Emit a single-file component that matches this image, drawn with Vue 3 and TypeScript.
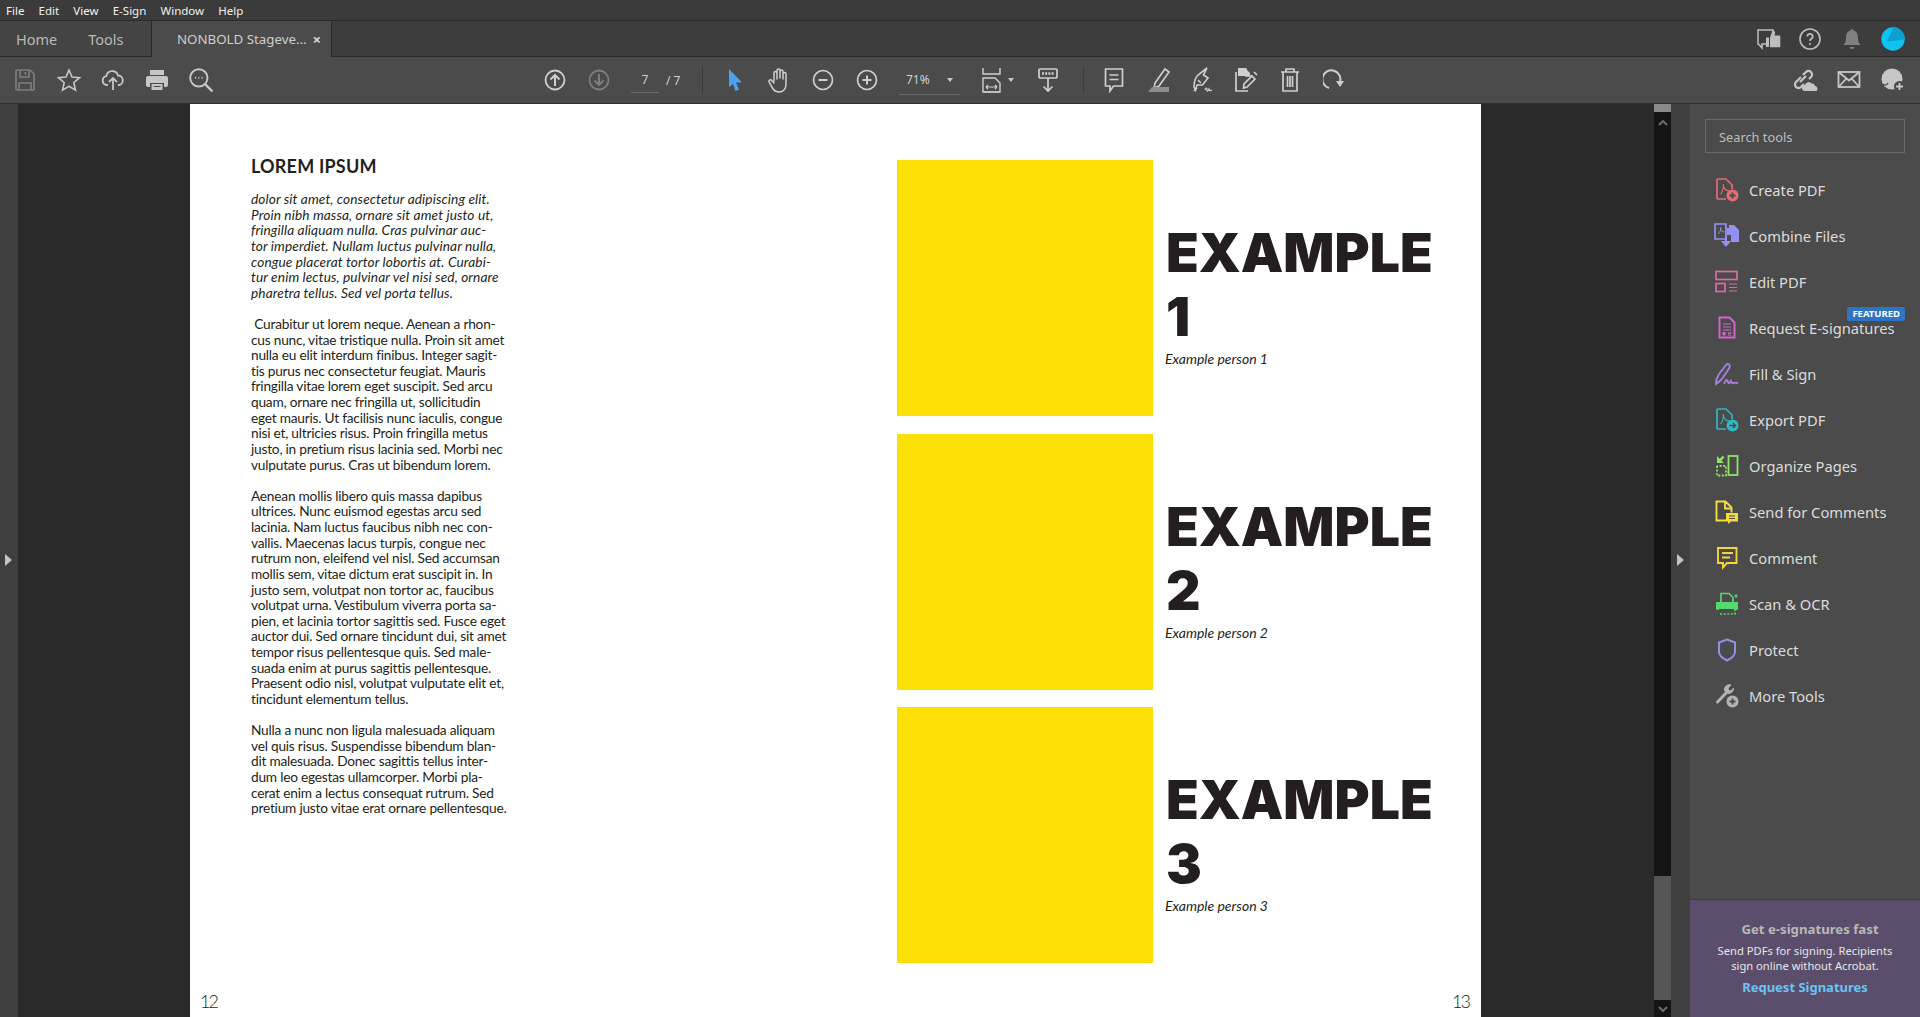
<template>
  <div class="app">
    <div class="menubar">
      <span v-for="m in menus" :key="m">{{ m }}</span>
    </div>

    <div class="tabbar">
      <div class="nav-tabs">
        <span>Home</span>
        <span>Tools</span>
      </div>
      <div class="doc-tab">
        <span>NONBOLD Stageve...</span>
        <b>×</b>
      </div>
      <div class="tab-actions">
        <button class="btn-icon">
          <svg width="24" height="24" viewBox="0 0 24 24" fill="none" stroke="#bdbdbd" stroke-width="1.500"><path d="M11 17H6l-1 0v4l-3.500-4H1V3h15v3"/><path d="M9 10.500h3v9.500H9z" fill="#bdbdbd" stroke="none"/><path d="M13 10.500l2.500-7c2 0 3 1.300 2.500 3l-.5 2h5a.8.8 0 0 1 .8.800V19.500a.8.8 0 0 1-.8.800H13z" fill="#bdbdbd" stroke="none"/></svg>
        </button>
        <button class="btn-icon">
          <svg width="24" height="24" viewBox="0 0 24 24" fill="none" stroke="#bdbdbd" stroke-width="1.600"><circle cx="12" cy="12" r="10"/><path d="M9.300 9.500a2.700 2.700 0 1 1 4 2.400c-.9.500-1.300 1-1.300 2" stroke-width="1.800"/><circle cx="12" cy="17" r="1.100" fill="#bdbdbd" stroke="none"/></svg>
        </button>
        <button class="btn-icon">
          <svg width="24" height="24" viewBox="0 0 24 24" fill="#808080"><path d="M12 2a1.500 1.500 0 0 1 1.500 1.600C17 4.500 18 7.500 18 11c0 3.500 1 5.500 2.500 7h-17C5 16.500 6 14.500 6 11c0-3.500 1-6.500 4.500-7.400A1.500 1.500 0 0 1 12 2z"/><path d="M9.500 20h5a2.500 2 0 0 1-5 0z"/></svg>
        </button>
        <button class="btn-icon">
          <svg width="24" height="24" viewBox="0 0 24 24"><circle cx="12" cy="12" r="11.700" fill="#10c2f2"/><path d="M12.500 .3A11.700 11.700 0 0 1 23.700 12.500L6 14.500z" fill="#0c9fd0"/></svg>
        </button>
      </div>
    </div>

    <div class="toolbar">
      <button class="btn-icon dim">
        <svg width="22" height="24" viewBox="0 0 22 24" fill="none" stroke="currentColor" stroke-width="1.700"><path d="M3 2h13l4 4v15a1 1 0 0 1-1 1H3a1 1 0 0 1-1-1V3a1 1 0 0 1 1-1z"/><path d="M6 2v7h9V2M5 22v-7h12v7M11.500 4v3"/></svg>
      </button>
      <button class="btn-icon">
        <svg width="24" height="24" viewBox="0 0 24 24" fill="none" stroke="#c6c6c6" stroke-width="1.600"><path d="M12 2l3 7 7.500.7-5.700 5 1.700 7.400-6.500-3.900-6.500 3.900 1.700-7.400-5.700-5L9 9z"/></svg>
      </button>
      <button class="btn-icon">
        <svg width="24" height="24" viewBox="0 0 24 24" fill="none" stroke="#c6c6c6" stroke-width="1.800"><path d="M7 17H6a4.500 4.500 0 0 1-.7-8.900A6 6 0 0 1 17 7.500a4.800 4.800 0 0 1 1 9.500h-1"/><path d="M12 22V10M8 14l4-4 4 4"/></svg>
      </button>
      <button class="btn-icon">
        <svg width="24" height="24" viewBox="0 0 24 24" fill="#c6c6c6"><path d="M5 2h14v5H5zM3 8h18a2 2 0 0 1 2 2v7a2 2 0 0 1-2 2h-2v-4H5v4H3a2 2 0 0 1-2-2v-7a2 2 0 0 1 2-2z"/><path d="M6.500 16h11v6h-11zM8.500 18v1h7v-1z" fill-rule="evenodd"/></svg>
      </button>
      <button class="btn-icon">
        <svg width="26" height="26" viewBox="0 0 24 24" fill="none" stroke="#c6c6c6" stroke-width="1.800"><circle cx="10" cy="10" r="8"/><path d="M16 16l6.500 6.500" stroke-width="2.200"/><path d="M6.500 10h1M9.500 10h1M12.500 10h1" stroke-width="1.800"/></svg>
      </button>

      <div class="nav-group">
        <button class="btn-icon">
          <svg width="22" height="22" viewBox="0 0 22 22" fill="none" stroke="#cfcfcf" stroke-width="1.800"><circle cx="11" cy="11" r="9.500"/><path d="M11 17V6M6.500 10.500L11 6l4.500 4.500" stroke-width="2"/></svg>
        </button>
        <button class="btn-icon dim">
          <svg width="22" height="22" viewBox="0 0 22 22" fill="none" stroke="currentColor" stroke-width="1.800"><circle cx="11" cy="11" r="9.500"/><path d="M11 5v11M6.500 11.500L11 16l4.500-4.500" stroke-width="2"/></svg>
        </button>
        <div class="page-box">
          <span class="page-input">7</span>
          <span>/ 7</span>
        </div>
        <i class="divider"></i>
      </div>

      <button class="btn-icon">
        <svg width="20" height="24" viewBox="0 0 20 24" fill="#4ba3ef"><path d="M4 1l13 13.500h-6l3 7-3.500 1.500-2.500-7L4 19z"/></svg>
      </button>
      <button class="btn-icon">
        <svg width="24" height="26" viewBox="0 0 24 26" fill="none" stroke="#cfcfcf" stroke-width="1.500" stroke-linecap="round"><path d="M7 14V6a1.500 1.500 0 0 1 3 0v6M10 11V3.500a1.500 1.500 0 0 1 3 0V11M13 11V4.500a1.500 1.500 0 0 1 3 0V12M16 12V7a1.500 1.500 0 0 1 3 0v10c0 5-3 8-7 8-3 0-5-1.500-6.500-4L2 15c-.8-1.500 1.500-3 2.700-1.500L7 16"/></svg>
      </button>
      <button class="btn-icon">
        <svg width="22" height="22" viewBox="0 0 22 22" fill="none" stroke="#cfcfcf" stroke-width="1.700"><circle cx="11" cy="11" r="9.500"/><path d="M6.500 11h9" stroke-width="2"/></svg>
      </button>
      <button class="btn-icon">
        <svg width="22" height="22" viewBox="0 0 22 22" fill="none" stroke="#cfcfcf" stroke-width="1.700"><circle cx="11" cy="11" r="9.500"/><path d="M6.500 11h9M11 6.500v9" stroke-width="2"/></svg>
      </button>
      <div class="zoom-box">
        <span>71%</span>
        <i class="caret"></i>
      </div>
      <button class="btn-icon fit">
        <svg width="22" height="26" viewBox="0 0 22 26" fill="none" stroke="#cfcfcf" stroke-width="1.400"><path d="M2 1v6h17V1"/><path d="M2 25V11h12l5 5v9z"/><path d="M5 20h11M5 20l2-2M5 20l2 2M16 20l-2-2M16 20l-2 2M2.500 25h16" stroke-width="1.200"/></svg>
        <i class="caret"></i>
      </button>
      <button class="btn-icon">
        <svg width="22" height="26" viewBox="0 0 22 26" fill="none" stroke="#cfcfcf" stroke-width="1.700"><rect x="2" y="2" width="18" height="9" rx="1"/><path d="M5 6.500h12" stroke-dasharray="2 1.200" stroke-width="2.400"/><path d="M11 11v13M6.500 19.500L11 24l4.500-4.500"/></svg>
      </button>
      <i class="divider wide"></i>
      <button class="btn-icon">
        <svg width="22" height="26" viewBox="0 0 22 26" fill="none" stroke="#cfcfcf" stroke-width="1.700"><path d="M2.500 2h17v17h-9L7 24v-5H2.500z"/><path d="M6.500 8h9M6.500 12.500h9"/></svg>
      </button>
      <button class="btn-icon">
        <svg width="24" height="26" viewBox="0 0 24 26" fill="none" stroke="#cfcfcf" stroke-width="1.600"><path d="M9 16L19 2l4 3-10 14-5 2z"/><path d="M2 25l4-5h17v5z" fill="#8d8d8d" stroke="none"/></svg>
      </button>
      <button class="btn-icon">
        <svg width="24" height="26" viewBox="0 0 24 26" fill="none" stroke="#cfcfcf" stroke-width="1.600"><path d="M17 1l-3.500 7L18 11l-5.500 7H7l-1.500 5L4 20c0-5 1-9 4-12z"/><path d="M8 13l3 3M4 24l3-3"/><path d="M15 23c1-3 2-2 2 0s1 1 2-1c.5 2 1.500 2 3 1" stroke-width="1.300"/></svg>
      </button>
      <button class="btn-icon">
        <svg width="24" height="26" viewBox="0 0 24 26" fill="none" stroke="#cfcfcf" stroke-width="1.700"><path d="M5 2h7v7h7" fill="none"/><path d="M4 1h7l5 5v3H4z" fill="#cfcfcf" stroke="none"/><path d="M2 5v19h12M18 9l3 3-8 8-3.500 1 .5-4z"/><path d="M20 5l3 3"/></svg>
      </button>
      <button class="btn-icon">
        <svg width="22" height="26" viewBox="0 0 22 26" fill="none" stroke="#cfcfcf" stroke-width="1.700"><path d="M2 5h18M7 5V2h8v3M4 5v19h14V5M8.500 9v11M11 9v11M13.500 9v11"/></svg>
      </button>
      <button class="btn-icon">
        <svg width="22" height="24" viewBox="0 0 22 24" fill="none" stroke="#cfcfcf" stroke-width="2"><path d="M6 20A9 9 0 1 1 17 14"/><path d="M13 13h8l-4 6z" fill="#cfcfcf" stroke="none"/></svg>
      </button>

      <div class="share-group">
        <button class="btn-icon">
          <svg width="26" height="24" viewBox="0 0 26 24" fill="none" stroke="#c6c6c6" stroke-width="2.200"><path d="M9 9l-5 5a3.500 3.500 0 0 0 5 5l3-3"/><path d="M8 14l6-6"/><path d="M11 7l3-3a3.500 3.500 0 0 1 5 5l-2 2"/><path d="M13 23a3 3 0 0 1 0-6c1-3.500 5-3.500 6.500-1.500 2-.5 3.500 1 3.500 2.500 1.500 0 2.500 1.500 2.500 2.500s-.5 2.500-1.500 2.500z" fill="#c6c6c6" stroke="none"/></svg>
        </button>
        <button class="btn-icon">
          <svg width="24" height="20" viewBox="0 0 24 20" fill="none" stroke="#c6c6c6" stroke-width="1.800"><rect x="1.500" y="2" width="21" height="15"/><path d="M1.500 2L12 10.500 22.500 2M1.500 17l7.500-8M22.500 17L15 9"/></svg>
        </button>
        <button class="btn-icon">
          <svg width="24" height="24" viewBox="0 0 24 24"><circle cx="11" cy="11" r="10.500" fill="#c6c6c6"/><path d="M2 16c2 2 4 1 5-1" fill="none" stroke="#4b4b4b" stroke-width="1.200"/><circle cx="18.500" cy="18.500" r="5.500" fill="#4b4b4b"/><path d="M18.500 15v7M15 18.500h7" stroke="#c6c6c6" stroke-width="1.800"/></svg>
        </button>
      </div>
    </div>

    <div class="workspace">
      <div class="rail left-rail"><i class="arrow"></i></div>

      <div class="canvas">
        <div class="page">
          <div class="page-body">
            <div class="article">
              <h2>LOREM IPSUM</h2>
              <p class="intro">{{ intro }}</p>
              <p v-for="(para, i) in paragraphs" :key="i">{{ para }}</p>
            </div>
            <div class="examples">
              <div v-for="n in 3" :key="n" class="example">
                <div class="swatch"></div>
                <div class="example-text">
                  <h1>EXAMPLE<br />{{ n }}</h1>
                  <em>Example person {{ n }}</em>
                </div>
              </div>
            </div>
          </div>
          <div class="folios">
            <span>12</span>
            <span>13</span>
          </div>
        </div>
      </div>

      <div class="scrollbar">
        <div class="thumb-top"></div>
        <svg class="chev" width="10" height="6" viewBox="0 0 10 6" fill="none" stroke="#6d6d6d" stroke-width="2"><path d="M1 5l4-4 4 4"/></svg>
        <div class="thumb"></div>
        <svg class="chev end" width="10" height="6" viewBox="0 0 10 6" fill="none" stroke="#6d6d6d" stroke-width="2"><path d="M1 1l4 4 4-4"/></svg>
      </div>

      <div class="rail right-rail"><i class="arrow"></i></div>

      <aside class="panel">
        <div class="panel-list">
          <div class="search">Search tools</div>
          <div class="tool">
            <svg width="24" height="24" viewBox="0 0 24 24" fill="none" stroke="#e26d72" stroke-width="1.700"><path d="M11 21H3a1 1 0 0 1-1-1V2a1 1 0 0 1 1-1h8l6 6v4"/><path d="M5.500 16c2-2 3.500-7 2.800-10-.4 3 1.500 7 6.200 7" stroke-width="1.100"/><circle cx="17.500" cy="17.500" r="6" fill="#e26d72" stroke="none"/><path d="M14.500 17.500h6M17.500 14.500v6" stroke="#4b4b4b" stroke-width="1.800"/></svg>
            <span>Create PDF</span>
          </div>
          <div class="tool">
            <svg width="26" height="26" viewBox="0 0 26 26" fill="none" stroke="#9290f2" stroke-width="1.700"><path d="M1 1h11v15H1z"/><path d="M4 11c2-1.500 3-4 2.500-6.500 0 2.500 1.500 4.500 4 4.500" stroke-width="1"/><path d="M15 2h5l5 5v12h-8v-7h-4V5h2z" fill="#9290f2" stroke="none"/><path d="M12 12v7" stroke-width="2"/><path d="M7 18h10l-5 6z" fill="#9290f2" stroke="none"/></svg>
            <span>Combine Files</span>
          </div>
          <div class="tool">
            <svg width="24" height="24" viewBox="0 0 24 24" fill="none" stroke="#dd69a6" stroke-width="1.700"><rect x="1" y="1.500" width="21" height="8"/><rect x="1" y="13.500" width="9" height="8"/><path d="M14 14h8M14 17.500h8M14 21h8" stroke-width="1.200"/></svg>
            <span>Edit PDF</span>
          </div>
          <div class="tool">
            <svg width="20" height="24" viewBox="0 0 20 24" fill="none" stroke="#d565d3" stroke-width="1.900"><path d="M2.500 1.500h10l5 5v15h-15z"/><path d="M6 8h8M6 11h8M6 14h8" stroke-width="1.200"/><path d="M5.500 16h3v2.500L7 20l-1.500-1.500z" fill="#d565d3" stroke="none"/><path d="M11 16.500l3 3M14 16.500l-3 3" stroke-width="1.300"/></svg>
            <span>Request E-signatures</span>
            <em class="badge">FEATURED</em>
          </div>
          <div class="tool">
            <svg width="26" height="24" viewBox="0 0 26 24" fill="none" stroke="#a57ddd" stroke-width="2"><path d="M2 22c0-5 1-7 3-10l7-9c1-1.500 3-1 3.500 0s.5 2-.5 3.500l-6 9c-1 1.500-3 4-7 6.500z"/><path d="M10 22c2-5 3-5 4-2 1 2 2 1 3-1 1 2 2 2.500 3 2s2 0 4 0"/></svg>
            <span>Fill &amp; Sign</span>
          </div>
          <div class="tool">
            <svg width="24" height="24" viewBox="0 0 24 24" fill="none" stroke="#33b6c1" stroke-width="1.700"><path d="M11 21H3a1 1 0 0 1-1-1V2a1 1 0 0 1 1-1h8l6 6v4"/><path d="M5.500 16c2-2 3.500-7 2.800-10-.4 3 1.500 7 6.200 7" stroke-width="1.100"/><circle cx="17.500" cy="17.500" r="6" fill="#33b6c1" stroke="none"/><path d="M14.500 17.500h6M18 15l2.500 2.500-2.500 2.500" stroke="#4b4b4b" stroke-width="1.600"/></svg>
            <span>Export PDF</span>
          </div>
          <div class="tool">
            <svg width="24" height="24" viewBox="0 0 24 24" fill="none" stroke="#93e267" stroke-width="1.800"><rect x="13.500" y="2" width="9" height="19"/><path d="M2 12v9.500h9V12H2" stroke-dasharray="2 1.600"/><path d="M2 2l0 7h7l-2.500-2.500 3-3-1.800-1.800-3 3z" fill="#93e267" stroke="none"/></svg>
            <span>Organize Pages</span>
          </div>
          <div class="tool">
            <svg width="24" height="24" viewBox="0 0 24 24" fill="none" stroke="#f5dc3c" stroke-width="1.900"><path d="M11 20.500H1.500V1.500h9l6 6v5M10 1.500v7h7"/><path d="M11 13h12v8.500h-7L13 24v-2.500h-2z" fill="#f5dc3c" stroke="none"/><path d="M14 16h6M14 18.500h6" stroke="#4b4b4b" stroke-width="1.100"/></svg>
            <span>Send for Comments</span>
          </div>
          <div class="tool">
            <svg width="22" height="24" viewBox="0 0 22 24" fill="none" stroke="#f2d63a" stroke-width="1.900"><path d="M2 2h18.500v15H11l-4 4.500V17H2z"/><path d="M6 7h11M6 11.500h8"/></svg>
            <span>Comment</span>
          </div>
          <div class="tool">
            <svg width="24" height="24" viewBox="0 0 24 24" fill="none" stroke="#56d86e" stroke-width="1.700"><path d="M6 10V1.500h8l4 4V10"/><path d="M1 10h22v7H1z" fill="#56d86e" stroke="none"/><path d="M4 15h16v7H4" stroke-dasharray="2 1.600"/><path d="M1 17h3M20 17h3"/><path d="M21 2v4M19 4h4" stroke-width="1.200"/></svg>
            <span>Scan &amp; OCR</span>
          </div>
          <div class="tool">
            <svg width="20" height="24" viewBox="0 0 20 24" fill="none" stroke="#9390e6" stroke-width="2"><path d="M10 1.500l8 3v9c0 4-3.500 7-8 9-4.500-2-8-5-8-9v-9z"/></svg>
            <span>Protect</span>
          </div>
          <div class="tool">
            <svg width="24" height="24" viewBox="0 0 24 24" fill="none" stroke="#b4b4b4" stroke-width="3"><path d="M2.500 18L12 8" stroke-linecap="round"/><path d="M9.500 6.500A5 5 0 0 1 16 1l-3 3 .5 2.500L16 7l2.500-3a5 5 0 0 1-7 5z" fill="#b4b4b4" stroke-width="1"/><circle cx="17.500" cy="17.500" r="6" fill="#b4b4b4" stroke="none"/><path d="M14.500 17.500h6M17.500 14.500v6" stroke="#4b4b4b" stroke-width="1.800"/></svg>
            <span>More Tools</span>
          </div>
        </div>
        <div class="promo">
          <strong>Get e-signatures fast</strong>
          <p>Send PDFs for signing. Recipients<br />sign online without Acrobat.</p>
          <a>Request Signatures</a>
        </div>
      </aside>
    </div>
  </div>
</template>

<script setup lang="ts">
const menus = ['File', 'Edit', 'View', 'E-Sign', 'Window', 'Help']

const intro = `dolor sit amet, consectetur adipiscing elit.
Proin nibh massa, ornare sit amet justo ut,
fringilla aliquam nulla. Cras pulvinar auc-
tor imperdiet. Nullam luctus pulvinar nulla,
congue placerat tortor lobortis at. Curabi-
tur enim lectus, pulvinar vel nisi sed, ornare
pharetra tellus. Sed vel porta tellus.`

const paragraphs: string[] = [
  ` Curabitur ut lorem neque. Aenean a rhon-
cus nunc, vitae tristique nulla. Proin sit amet
nulla eu elit interdum finibus. Integer sagit-
tis purus nec consectetur feugiat. Mauris
fringilla vitae lorem eget suscipit. Sed arcu
quam, ornare nec fringilla ut, sollicitudin
eget mauris. Ut facilisis nunc iaculis, congue
nisi et, ultricies risus. Proin fringilla metus
justo, in pretium risus lacinia sed. Morbi nec
vulputate purus. Cras ut bibendum lorem.`,
  `Aenean mollis libero quis massa dapibus
ultrices. Nunc euismod egestas arcu sed
lacinia. Nam luctus faucibus nibh nec con-
vallis. Maecenas lacus turpis, congue nec
rutrum non, eleifend vel nisl. Sed accumsan
mollis sem, vitae dictum erat suscipit in. In
justo sem, volutpat non tortor ac, faucibus
volutpat urna. Vestibulum viverra porta sa-
pien, et lacinia tortor sagittis sed. Fusce eget
auctor dui. Sed ornare tincidunt dui, sit amet
tempor risus pellentesque quis. Sed male-
suada enim at purus sagittis pellentesque.
Praesent odio nisl, volutpat vulputate elit et,
tincidunt elementum tellus.`,
  `Nulla a nunc non ligula malesuada aliquam
vel quis risus. Suspendisse bibendum blan-
dit malesuada. Donec sagittis tellus inter-
dum leo egestas ullamcorper. Morbi pla-
cerat enim a lectus consequat rutrum. Sed
pretium justo vitae erat ornare pellentesque.`,
]
</script>

<style>
html,
body {
  margin: 0;
  background: #2a2a2a;
}
</style>

<style scoped>
.app {
  display: flex;
  flex-direction: column;
  width: 1920px;
  height: 1017px;
  overflow: hidden;
  font-family: 'Noto Sans', 'Open Sans', sans-serif;
  color: #d4d4d4;
  background: #2a2a2a;
}
.btn-icon {
  display: flex;
  align-items: center;
  justify-content: center;
  flex: none;
  width: 44px;
  height: 44px;
  padding: 0;
  border: none;
  background: transparent;
  color: #cfcfcf;
}
.btn-icon.dim {
  color: #7d7d7d;
}

.menubar {
  display: flex;
  align-items: center;
  gap: 14.200px;
  height: 20px;
  padding-left: 6px;
  font-size: 11.500px;
  color: #f0f0f0;
  background: #3b3b3b;
  border-bottom: 1px solid #2a2a2a;
}

.tabbar {
  display: flex;
  height: 35px;
  background: #3d3d3d;
  border-bottom: 1px solid #2a2a2a;
}
.nav-tabs {
  display: flex;
  align-items: center;
  gap: 31px;
  width: 151px;
  padding-left: 16px;
  box-sizing: border-box;
  font-size: 14.500px;
  color: #b8b8b8;
  background: #444;
}
.doc-tab {
  display: flex;
  align-items: center;
  justify-content: space-between;
  width: 181px;
  height: 36px;
  padding: 0 10px 0 25px;
  box-sizing: border-box;
  font-size: 13.300px;
  white-space: nowrap;
  color: #cdcdcd;
  background: #4b4b4b;
  border-left: 1px solid #2a2a2a;
  border-right: 1px solid #2a2a2a;
}
.doc-tab b {
  font-size: 15px;
  color: #d8d8d8;
}
.tab-actions {
  display: flex;
  align-items: center;
  margin-left: auto;
  padding-right: 6px;
}
.tab-actions .btn-icon {
  width: 41.500px;
  height: 35px;
}

.toolbar {
  display: flex;
  align-items: center;
  height: 46px;
  padding-left: 3px;
  background: #4b4b4b;
  border-bottom: 1px solid #2f2f2f;
}
.nav-group {
  display: flex;
  align-items: center;
  margin-left: 310px;
}
.page-box {
  display: flex;
  align-items: center;
  gap: 7px;
  width: 81px;
  padding-left: 10px;
  box-sizing: border-box;
  font-size: 12px;
  color: #d0d0d0;
}
.page-input {
  width: 28px;
  padding-bottom: 4px;
  margin-top: 4px;
  text-align: center;
  border-bottom: 1px solid #686868;
}
.divider {
  display: block;
  width: 1px;
  height: 28px;
  background: #3c3c3c;
  margin-right: 10px;
}
.divider.wide {
  margin: 0 8px 0 13px;
}
.zoom-box {
  display: flex;
  align-items: center;
  justify-content: space-between;
  width: 61px;
  height: 30px;
  margin: 0 10px;
  padding: 0 7px 0 7px;
  box-sizing: border-box;
  font-size: 12px;
  color: #d0d0d0;
  border-bottom: 1px solid #686868;
}
.caret {
  display: block;
  width: 0;
  height: 0;
  border-left: 3.500px solid transparent;
  border-right: 3.500px solid transparent;
  border-top: 4px solid #c8c8c8;
}
.fit {
  width: 56px;
  gap: 5px;
  justify-content: flex-start;
  padding-left: 11px;
  box-sizing: border-box;
}
.share-group {
  display: flex;
  margin-left: auto;
  padding-right: 5px;
}

.workspace {
  display: flex;
  flex: 1;
  min-height: 0;
}
.rail {
  position: relative;
  flex: none;
  background: #3f3f3f;
}
.left-rail {
  width: 18px;
}
.right-rail {
  width: 19px;
}
.arrow {
  position: absolute;
  top: 450px;
  left: 5px;
  width: 0;
  height: 0;
  border-top: 6px solid transparent;
  border-bottom: 6px solid transparent;
  border-left: 7px solid #c4c4c4;
}
.right-rail .arrow {
  left: 6px;
}

.canvas {
  flex: 1;
  display: flex;
  min-width: 0;
  padding-left: 172px;
  background: #2a2a2a;
}
.page {
  display: flex;
  flex-direction: column;
  width: 1291px;
  box-sizing: border-box;
  background: #fff;
  color: #231f20;
  font-family: Lato, 'Noto Sans', sans-serif;
}
.page-body {
  display: flex;
  flex: 1;
  padding: 56px 0 0 61px;
}
.article {
  width: 646px;
  flex: none;
  margin-top: -5.500px;
}
.article h2 {
  margin: 0 0 14.500px;
  font-size: 18px;
  line-height: 22px;
  font-weight: 700;
  letter-spacing: 0.2px;
}
.article p {
  margin: 0 0 15.620px;
  font-size: 13.700px;
  line-height: 15.620px;
  letter-spacing: -0.22px;
  white-space: pre;
}
.article .intro {
  font-style: italic;
  letter-spacing: 0.1px;
}
.examples {
  display: flex;
  flex-direction: column;
  gap: 17.500px;
}
.example {
  display: flex;
  height: 256px;
}
.swatch {
  width: 256px;
  flex: none;
  background: #fbdf07;
}
.example-text {
  padding: 61px 0 0 13px;
}
.example-text h1 {
  margin: 0;
  font-family: Inter, Lato, sans-serif;
  font-size: 53.500px;
  line-height: 64px;
  font-weight: 900;
  color: #231f20;
}
.example-text em {
  display: block;
  margin: 2px 0 0 -1px;
  font-size: 14px;
  line-height: 16px;
  font-weight: 400;
}
.folios {
  display: flex;
  justify-content: space-between;
  padding: 0 12px 5px 10px;
  font-size: 18px;
  line-height: 22px;
  font-weight: 300;
  letter-spacing: -2px;
}

.scrollbar {
  display: flex;
  flex-direction: column;
  align-items: center;
  flex: none;
  width: 17px;
  background: #141414;
}
.thumb-top {
  width: 100%;
  height: 8px;
  background: #8a8a8a;
}
.thumb {
  width: 100%;
  height: 124px;
  margin-top: auto;
  background: #555;
}
.chev {
  margin-top: 8px;
}
.chev.end {
  margin: 6px 0 5px;
}

.panel {
  display: flex;
  flex-direction: column;
  flex: none;
  width: 230px;
  background: #4b4b4b;
}
.panel-list {
  flex: 1;
  padding: 15px 15px 0 15px;
}
.search {
  display: flex;
  align-items: center;
  height: 34px;
  margin-bottom: 14px;
  padding: 1px 0 0 13px;
  box-sizing: border-box;
  font-size: 12.800px;
  color: #bcbcbc;
  border: 1px solid #6a6a6a;
}
.tool {
  position: relative;
  display: flex;
  align-items: center;
  height: 46px;
  font-size: 14.700px;
  white-space: nowrap;
  color: #dcdcdc;
}
.tool svg {
  flex: none;
  width: 28px;
  margin-left: 8px;
  margin-right: 8px;
}
.badge {
  position: absolute;
  top: 2px;
  right: 0;
  padding: 0 5px;
  border-radius: 2px;
  font-size: 9.500px;
  line-height: 14px;
  font-style: normal;
  font-weight: 700;
  color: #fff;
  background: #2d74c7;
}
.promo {
  display: flex;
  flex-direction: column;
  align-items: center;
  height: 118px;
  padding-top: 20px;
  box-sizing: border-box;
  text-align: center;
  background: #5b4e6c;
  border-top: 1px solid #3f3f3f;
}
.promo strong {
  padding-left: 10px;
  font-size: 13.200px;
  line-height: 18px;
  color: #b8b8b8;
}
.promo p {
  margin: 5px 0 5px;
  font-size: 11.200px;
  line-height: 15px;
  color: #e6e6e6;
}
.promo a {
  font-size: 13px;
  line-height: 18px;
  font-weight: 700;
  color: #6cc2f2;
}
</style>
